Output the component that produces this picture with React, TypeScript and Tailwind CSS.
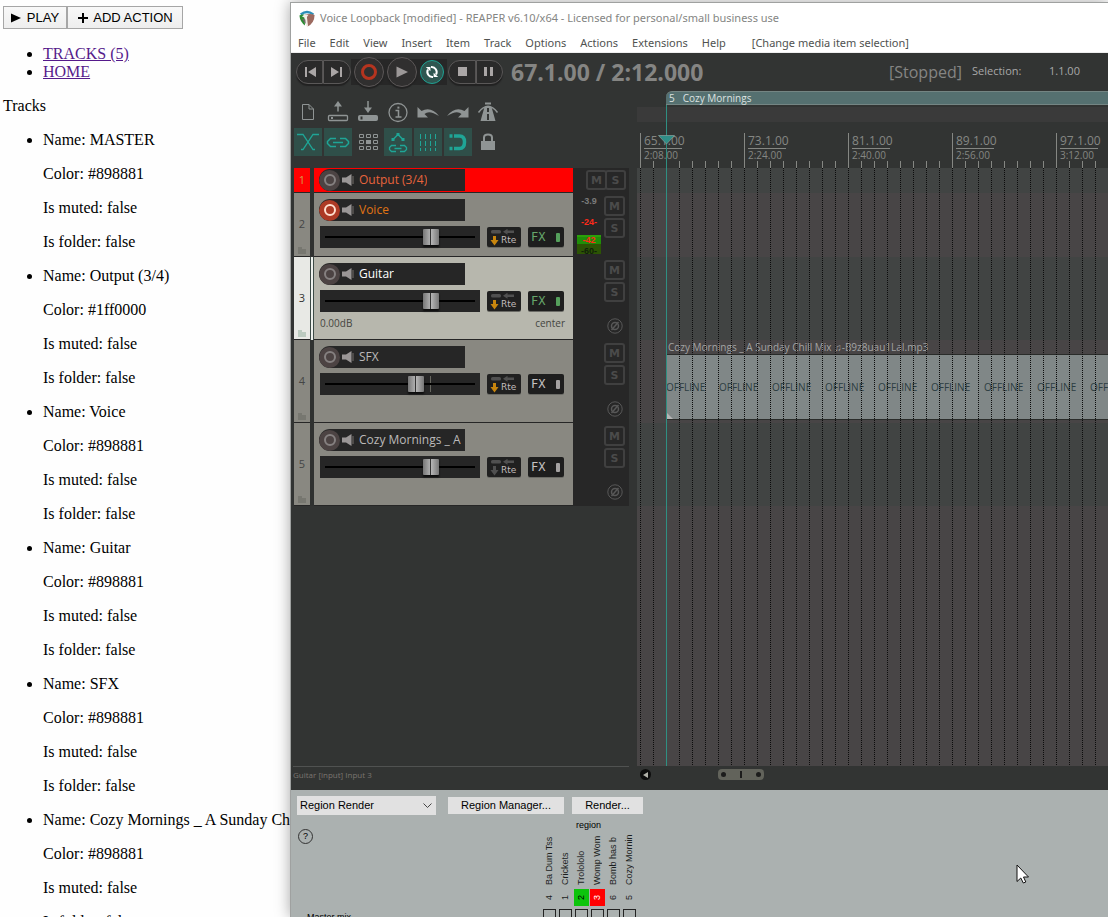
import React from "react";

type Track = {
  n: number;
  name: string;
  level: number;
  armed?: boolean;
  selected?: boolean;
  routed?: boolean;
  fxOn?: boolean;
  row: string;
  lane: string;
  nameColor: string;
  compact?: boolean;
  tall?: boolean;
};

const tracks: Track[] = [
  { n: 1, name: "Output (3/4)", level: 712, compact: true, row: "h-[25px]", lane: "bg-[#414443]", nameColor: "text-[#e8643c]" },
  { n: 2, name: "Voice", level: 712, armed: true, routed: true, fxOn: true, row: "h-[64px]", lane: "bg-[#484546]", nameColor: "text-[#e07414]" },
  { n: 3, name: "Guitar", level: 712, selected: true, routed: true, fxOn: true, tall: true, row: "h-[83px]", lane: "bg-[#414443]", nameColor: "text-white" },
  { n: 4, name: "SFX", level: 608, routed: true, tall: true, row: "h-[83px]", lane: "bg-[#484546]", nameColor: "text-[#bcbaba]" },
  { n: 5, name: "Cozy Mornings _ A Sunday Chill Mix", level: 712, tall: true, row: "h-[83px]", lane: "bg-[#414443]", nameColor: "text-[#bcbaba]" },
];

const listed = [
  { name: "MASTER", color: "#898881" },
  { name: "Output (3/4)", color: "#1ff0000" },
  { name: "Voice", color: "#898881" },
  { name: "Guitar", color: "#898881" },
  { name: "SFX", color: "#898881" },
  { name: "Cozy Mornings _ A Sunday Chill Mix", color: "#898881" },
];

const menus = ["File", "Edit", "View", "Insert", "Item", "Track", "Options", "Actions", "Extensions", "Help"];

const bars = [
  ["65.1.00", "2:08.00"],
  ["73.1.00", "2:24.00"],
  ["81.1.00", "2:40.00"],
  ["89.1.00", "2:56.00"],
  ["97.1.00", "3:12.00"],
];

const regions = [
  { n: 4, name: "Ba Dum Tss", tag: "text-[#1c1f1f]" },
  { n: 1, name: "Crickets", tag: "text-[#1c1f1f]" },
  { n: 2, name: "Trolololo", tag: "bg-[#0cc40c] text-black" },
  { n: 3, name: "Womp Wom", tag: "bg-[#ff0000] text-white" },
  { n: 6, name: "Bomb has b", tag: "text-[#1c1f1f]" },
  { n: 5, name: "Cozy Mornin", tag: "text-[#1c1f1f]" },
];

function WebPage() {
  return (
    <section className="w-[290px] shrink-0 overflow-hidden whitespace-nowrap bg-[#fefefe] pl-[3px] pt-1.5 font-['Liberation_Serif',serif] text-[16px] leading-[18px] text-black">
      <div className="flex font-['Liberation_Sans',sans-serif] text-[13px] text-black">
        <button className="flex h-[23px] w-[64px] items-center justify-center gap-1.5 border border-[#a6a6a6] bg-linear-to-b from-[#f8f8f8] to-[#eeeeee]">
          <svg width="10" height="10" viewBox="0 0 10 10"><path d="M0 0.5 L10 5 L0 9.5Z" /></svg>
          PLAY
        </button>
        <button className="flex h-[23px] w-[116px] items-center justify-center gap-1 border border-[#a6a6a6] bg-linear-to-b from-[#f8f8f8] to-[#eeeeee]">
          <svg width="12" height="12" viewBox="0 0 12 12"><path d="M6 1V11M1 6H11" stroke="#000" strokeWidth="2" /></svg>
          ADD ACTION
        </button>
      </div>
      <ul className="mt-4 list-disc pl-10">
        <li><a href="#tracks" className="text-[#551a8b] underline">TRACKS (5)</a></li>
        <li><a href="#home" className="text-[#551a8b] underline">HOME</a></li>
      </ul>
      <p className="my-4">Tracks</p>
      <ul className="list-disc pl-10">
        {listed.map((t) => (
          <li key={t.name}>
            <p className="mb-4">Name: {t.name}</p>
            <p className="mb-4">Color: {t.color}</p>
            <p className="mb-4">Is muted: false</p>
            <p className="mb-4">Is folder: false</p>
          </li>
        ))}
      </ul>
    </section>
  );
}

function Logo() {
  return (
    <svg width="16" height="17" viewBox="0 0 16 17">
      <path d="M1 3.4Q8-2 15 3.4L14 5.6Q8 1 2.4 5.4Z" fill="#2d8fb8" />
      <path d="M0.4 5.6Q3 4 5.4 4.6L6 15.6Q1 12 0.4 5.6Z" fill="#2e8c34" />
      <path d="M6 4.6Q12 3 15.6 5Q15.4 13 8.6 16.6Q7.6 10 6 4.6Z" fill="#9c6a60" />
      <path d="M3 6.4Q6 3.4 9.4 5.4Q7.4 6 8.2 9L9 16.6L7 16Q7 9 5.4 7.4Q4 6.8 3 6.4Z" fill="#f4efe8" />
      <path d="M2.6 8.4L6.4 9.4L6.8 14Z" fill="#6f6a66" />
    </svg>
  );
}

function TitleAndMenu() {
  return (
    <header className="bg-white font-['Noto_Sans',sans-serif] text-[11px]">
      <div className="flex h-[30px] items-center gap-[5px] pl-2 text-[#848583]">
        <Logo />
        <h1>Voice Loopback [modified] - REAPER v6.10/x64 - Licensed for personal/small business use</h1>
      </div>
      <nav className="flex h-5 items-center gap-3.5 border-b border-[#eeeeee] pl-[7px] pt-0.5 text-[#505250]">
        {menus.map((m) => (
          <button key={m}>{m}</button>
        ))}
        <span className="pl-3">[Change media item selection]</span>
      </nav>
    </header>
  );
}

function Transport() {
  return (
    <div className="flex h-[37px] items-center pl-[5px] font-['Open_Sans',sans-serif] text-[#8f8f8f]">
      <div className="flex h-[30px] shrink-0 items-center">
        <button aria-label="Go to start" className="flex h-6 w-[27px] items-center justify-center rounded-l-full border border-[#5a5858] bg-[#2a2a2a] pl-0.5 shadow-[0_2px_1px_#222]">
          <svg width="11" height="10" viewBox="0 0 11 10" fill="#aaa6a6"><path d="M0 0H2V10H0ZM11 0V10L3 5Z" /></svg>
        </button>
        <button aria-label="Go to end" className="flex h-6 w-[28px] items-center justify-center rounded-r-full border border-[#5a5858] bg-[#2a2a2a] pr-0.5 shadow-[0_2px_1px_#222]">
          <svg width="11" height="10" viewBox="0 0 11 10" fill="#aaa6a6"><path d="M9 0H11V10H9ZM0 0V10L8 5Z" /></svg>
        </button>
        <div className="flex h-[26px] items-center gap-[3px] bg-[#272727] px-[3px]">
          <button aria-label="Record" className="flex size-[30px] items-center justify-center rounded-full border border-[#5c5858] bg-[#302f2f] shadow-[0_2px_1px_#222]">
            <span className="size-4 rounded-full border-[3px] border-[#b5341f]" />
          </button>
          <button aria-label="Play" className="flex size-[30px] items-center justify-center rounded-full border border-[#5c5858] bg-[#302f2f] shadow-[0_2px_1px_#222]">
            <svg width="12" height="12" viewBox="0 0 12 12" fill="#9c9898"><path d="M0.5 0.5L12 6L0.5 11.5Z" /></svg>
          </button>
          <button aria-label="Repeat" className="flex size-6 items-center justify-center rounded-full border border-[#1fa294] bg-[#2f5650]">
            <svg width="14" height="14" viewBox="0 0 14 14" fill="none" stroke="#fff" strokeWidth="2">
              <path d="M6 2.100A5 5 0 0 1 11 9.500M8 11.900A5 5 0 0 1 3 4.500" />
              <path d="M0.800 2H5.400V6.200ZM13.200 12H8.600V7.800Z" fill="#fff" stroke="none" />
            </svg>
          </button>
        </div>
        <button aria-label="Stop" className="ml-px flex h-6 w-[28px] items-center justify-center rounded-l-full border border-[#5a5858] bg-[#2a2a2a] shadow-[0_2px_1px_#222]">
          <span className="size-[9px] bg-[#aaa6a6]" />
        </button>
        <button aria-label="Pause" className="flex h-6 w-[27px] items-center justify-center gap-[3px] rounded-r-full border border-[#5a5858] bg-[#2a2a2a] pr-0.5 shadow-[0_2px_1px_#222]">
          <span className="h-[9px] w-[3px] bg-[#aaa6a6]" />
          <span className="h-[9px] w-[3px] bg-[#aaa6a6]" />
        </button>
      </div>
      <span className="ml-2 w-[378px] shrink-0 whitespace-nowrap text-[23px] font-bold leading-7 text-[#858583]">67.1.00 / 2:12.000</span>
      <span className="w-[83px] shrink-0 text-[16px] text-[#858583]">[Stopped]</span>
      <span className="w-[77px] shrink-0 text-[11px] text-[#a8a8a8]">Selection:</span>
      <span className="text-[11px] text-[#a8a8a8]">1.1.00</span>
    </div>
  );
}

const tools: { label: string; on?: boolean; art: React.ReactNode }[] = [
  { label: "New project", art: <path d="M8.500 6.500H15L19.500 11V21.500H8.500ZM15 6.500V11H19.500" /> },
  { label: "Open project", art: <><path d="M14 13.500V5" strokeWidth="1.500" /><path d="M10 8.500L14 3L18 8.500Z" fill="currentColor" stroke="none" /><rect x="4.500" y="17.500" width="19" height="5" rx="1" strokeWidth="1.300" /><path d="M7 20H9" strokeWidth="2" /></> },
  { label: "Save project", art: <><path d="M14 3V11" strokeWidth="1.500" /><path d="M10 9.500L14 15L18 9.500Z" fill="currentColor" stroke="none" /><rect x="4.500" y="17.500" width="19" height="5" rx="1" fill="currentColor" /><path d="M7.500 18.500V21.500" stroke="#323433" strokeWidth="2" /></> },
  { label: "Project settings", art: <><circle cx="14" cy="14.500" r="9" strokeWidth="1.300" /><path d="M11.500 12.500H14.500V19M11.500 19H17.500" strokeWidth="1.500" /><path d="M13.400 8.600h2v2h-2z" fill="currentColor" stroke="none" /></> },
  { label: "Undo", art: <path d="M3.500 9V19.500H14L10.500 16Q15 11.500 25 18Q17 8 7.500 13Z" fill="currentColor" stroke="none" /> },
  { label: "Redo", art: <path d="M24.500 9V19.500H14L17.500 16Q13 11.500 3 18Q11 8 20.500 13Z" fill="currentColor" stroke="none" /> },
  { label: "Metronome", art: <><path d="M10.500 9H17.500L21.500 23H6.500Z" fill="currentColor" stroke="none" /><path d="M14 10V14M14 16V22" stroke="#323433" strokeWidth="2" /><path d="M4.500 14.500Q14 2 23.500 14.500" strokeWidth="1.500" /><path d="M11 5.500H17" strokeWidth="2" /></> },
  { label: "Auto crossfade", on: true, art: <path d="M3 6.500H9L19 21.500H21M25 6.500H19L9 21.500H7" strokeWidth="1.300" /> },
  { label: "Item grouping", on: true, art: <path d="M12 10.500H6.500L3.500 13.500V15.500L6.500 18.500H12M16 10.500H21.500L24.500 13.500V15.500L21.500 18.500H16M9 14.500H19" strokeWidth="1.500" /> },
  { label: "Ripple editing", art: <><path d="M5.500 6.500h4v3h-4zM12.500 6.500h4v3h-4zM19.500 6.500h4v3h-4zM5.500 12.500h4v3h-4zM19.500 12.500h4v3h-4zM5.500 18.500h4v3h-4zM12.500 18.500h4v3h-4zM19.500 18.500h4v3h-4z" /><path d="M12 12h5v4h-5z" fill="currentColor" stroke="none" /></> },
  { label: "Move envelopes", on: true, art: <><path d="M9 11.500L14 6.500L19 11.500" strokeWidth="1.500" /><path d="M12.500 5h3v3h-3zM7.500 10h3v3h-3zM17.500 10h3v3h-3z" fill="currentColor" stroke="none" /><path d="M12 17.500H7.500L5.500 19.500V21.500L7.500 23.500H12M16 17.500H20.500L22.500 19.500V21.500L20.500 23.500H16M10.500 20.500H17.500" strokeWidth="1.300" /></> },
  { label: "Grid lines", on: true, art: <path d="M6.500 6V23M11.500 6V23M16.500 6V23M21.500 6V23" strokeDasharray="5 2" /> },
  { label: "Snap", on: true, art: <><path d="M10 8H15.500Q20.500 8 20.500 14Q20.500 20.500 15.500 20.500H10" strokeWidth="3.500" /><path d="M5.500 6.200h3v3.500h-3zM5.500 18.700h3v3.500h-3z" fill="currentColor" stroke="none" /></> },
  { label: "Locking", art: <><path d="M7 13H21V22H7Z" fill="currentColor" stroke="none" /><path d="M10 13V9.500Q10 6.500 14 6.500Q18 6.500 18 9.500V13" strokeWidth="2" /></> },
];

function Toolbar() {
  return (
    <div className="grid h-[78px] w-fit grid-cols-7 content-end gap-x-0.5 gap-y-0.5 pb-3 pl-[3px]">
      {tools.map((t) => (
        <button
          key={t.label}
          aria-label={t.label}
          className={t.on ? "size-7 bg-[#2f4f49] text-[#1fa596]" : "size-7 text-[#8f9494]"}
        >
          <svg width="28" height="28" viewBox="0 0 28 28" fill="none" stroke="currentColor" strokeWidth="1">
            {t.art}
          </svg>
        </button>
      ))}
    </div>
  );
}

const msButton =
  "flex h-5 w-[21px] items-center justify-center rounded-[3px] border-2 border-[#404040] font-['DejaVu_Sans',sans-serif] text-[11px] font-bold leading-none text-[#4b4b4b]";

function Meters({ t }: { t: Track }) {
  if (t.compact) {
    return (
      <div className="flex w-14 shrink-0 justify-end -space-x-0.5 bg-[#272727] pr-[3px] pt-0.5">
        <button aria-label="Mute" className={msButton}>M</button>
        <button aria-label="Solo" className={msButton}>S</button>
      </div>
    );
  }
  return (
    <div className="flex w-14 shrink-0 justify-between bg-[#272727] pl-1 pr-1 pt-[3px]">
      <div className="flex w-6 flex-col items-center font-['Liberation_Sans',sans-serif] text-[9px] font-bold">
        {t.armed && (
          <>
            <span className="leading-[11px] text-[#7a7a7a]">-3.9</span>
            <span className="pt-2 leading-[14px] text-[#ff2a1a]">-24-</span>
            <div className="mt-1.5 flex h-[19px] w-6 flex-col items-center justify-between border-t-2 border-[#2aa00a] bg-linear-to-b from-[#1f8f08] from-40% to-[#2c5404] to-40% leading-[6px]">
              <span className="text-[#ff2a1a]">-42</span>
              <span className="text-[#10200a]">-60-</span>
            </div>
          </>
        )}
      </div>
      <div className="flex flex-col items-center gap-0.5">
        <button aria-label="Mute" className={msButton}>M</button>
        <button aria-label="Solo" className={msButton}>S</button>
        {t.tall && (
          <button aria-label="Phase" className="mt-3.5 size-4">
            <svg width="16" height="16" viewBox="0 0 16 16" fill="none" stroke="#585858">
              <circle cx="8" cy="8" r="7.200" />
              <circle cx="8" cy="8" r="3.500" strokeWidth="1.500" />
              <path d="M4.500 12L11.500 4" strokeWidth="1.500" />
            </svg>
          </button>
        )}
      </div>
    </div>
  );
}

function TrackRow({ t }: { t: Track }) {
  const numberBg = t.compact
    ? "bg-[#ff0000] text-[#d99a4a]"
    : t.selected
      ? "bg-[#e8e9e5] text-[#333]"
      : "bg-[#898881] text-[#444545]";
  const panelBg = t.compact ? "bg-[#ff0000]" : t.selected ? "bg-[#b7b7ad]" : "bg-[#898881]";
  return (
    <li className={`flex ${t.row}`}>
      <div className={`relative flex w-4 shrink-0 items-center justify-center border-b border-[#262626] text-[11px] ${numberBg}`}>
        {t.n}
        {!t.compact && (
          <svg className={`absolute bottom-0.5 left-1 ${t.selected ? "text-[#bccbc0]" : "text-[#777770]"}`} width="8" height="7" viewBox="0 0 8 7" fill="currentColor">
            <path d="M0 0H4V2H8V7H0Z" />
          </svg>
        )}
      </div>
      <div className={t.selected ? "w-1 shrink-0 border-x border-[#3c4a46] bg-[#eef2ee]" : "w-1 shrink-0 bg-[#2f3130]"} />
      <div className={`flex min-w-0 flex-1 flex-col border-b border-[#262626] pl-[5px] ${t.compact ? "pt-px" : "pt-1.5"} ${panelBg}`}>
        <div className="flex h-[22px] w-[146px] shrink-0 items-center overflow-hidden rounded-l-full bg-[#262626]">
          <button
            aria-label="Record arm"
            className={`flex size-[21px] shrink-0 items-center justify-center rounded-full ${t.armed ? "bg-[#ad3a25]" : "bg-[#4c4343]"}`}
          >
            <span className={`size-3 rounded-full border-2 ${t.armed ? "border-[#ffe0d0]" : "border-[#858080]"}`} />
          </button>
          <svg className="ml-0.5 shrink-0" width="12" height="12" viewBox="0 0 12 12">
            <path d="M0 3.500H4L9.500 0V12L4 8.500H0Z" fill="#9a9696" />
            <path d="M11 2V10" stroke="#77706c" />
          </svg>
          <span className={`ml-[5px] mr-0.5 overflow-hidden whitespace-nowrap text-[12px] leading-5 ${t.nameColor}`}>{t.name}</span>
        </div>
        {!t.compact && (
          <div className="mt-[5px] flex h-[22px] items-center pl-px">
            <div className="relative h-[22px] w-40 shrink-0 bg-[#262626]">
              {t.level !== 712 && <span className="absolute left-[110px] top-[3px] h-4 w-px bg-[#66665f]" />}
              <input
                type="range"
                aria-label={`${t.name} volume`}
                min={0}
                max={1000}
                defaultValue={t.level}
                className="relative block h-[22px] w-40 appearance-none bg-[linear-gradient(#000,#000)] bg-[length:150px_2px] bg-center bg-no-repeat [&::-webkit-slider-thumb]:h-4 [&::-webkit-slider-thumb]:w-4 [&::-webkit-slider-thumb]:appearance-none [&::-webkit-slider-thumb]:rounded-[1px] [&::-webkit-slider-thumb]:bg-[linear-gradient(90deg,#777_0,#b0b0b0_45%,#333_45%,#333_52%,#b5b5b5_52%,#777_100%)] [&::-webkit-slider-thumb]:shadow-[0_2px_2px_#0c0c0c]"
              />
            </div>
            <button className="ml-[7px] flex h-5 w-[34px] shrink-0 items-end rounded-[2px] bg-[#202020] pl-[3px] shadow-[0_1px_0_#6b6b66]">
              <svg width="30" height="18" viewBox="0 0 30 18" className="-mr-[19px] shrink-0">
                <rect x="1" y="1" width="10" height="3.500" rx="1.500" fill="#505050" />
                <path d="M13 2.800L17.500 -0.200V1.500H24V4H17.500V5.800Z" fill="#505050" />
                <path d="M3 7H6V11H8.500L4.500 16.500L0.500 11H3Z" fill={t.routed ? "#c8860e" : "#505050"} />
              </svg>
              <span className="font-['DejaVu_Sans',sans-serif] text-[9px] leading-[13px] text-[#c0bcbc]">Rte</span>
            </button>
            <button className={`ml-[7px] flex h-5 w-9 shrink-0 items-center justify-between rounded-[2px] bg-[#1e1e1e] pl-[3px] pr-1 font-['DejaVu_Sans_Mono',monospace] text-[12px] leading-none shadow-[0_1px_0_#6b6b66] ${t.fxOn ? "text-[#66a66b]" : "text-[#c5c2c2]"}`}>
              FX
              <span className={`h-[9px] w-1 rounded-[1px] ${t.fxOn ? "bg-[#55a05c]" : "bg-[#a5a2a2]"}`} />
            </button>
          </div>
        )}
        {t.selected && (
          <div className="flex justify-between pl-px pr-2 pt-[3px] text-[10px] leading-4 text-[#45453f]">
            <span>0.00dB</span>
            <span>center</span>
          </div>
        )}
      </div>
      <Meters t={t} />
    </li>
  );
}

function Ruler() {
  return (
    <div className="flex h-[78px] flex-col overflow-hidden pt-px">
      <div className="ml-[29px] flex h-3.5 items-center gap-2 rounded-tl-md border-y border-[#748583] bg-[#557070] pl-[3px] text-[10px] leading-3 text-[#dde2e0]">
        <span>5</span>
        <span>Cozy Mornings</span>
      </div>
      <div className="mt-0.5 h-[15px] bg-[#3a3a3a]" />
      <div className="relative mt-[11px] flex h-[35px] pl-[3px]">
        {bars.map(([bar, time]) => (
          <div key={bar} className="w-[104px] shrink-0 border-l border-[#858783] pl-[3px] text-[#858783]">
            <div className="w-[38px] border-b border-[#858783] text-[12px] leading-[15px]">{bar}</div>
            <div className="text-[10px] leading-3">{time}</div>
          </div>
        ))}
        <svg className="absolute bottom-0 left-[3px] h-[7px] w-full">
          <defs>
            <pattern id="ticks" width="13" height="7" patternUnits="userSpaceOnUse">
              <rect width="1" height="7" fill="#858783" />
            </pattern>
          </defs>
          <rect width="100%" height="7" fill="url(#ticks)" />
        </svg>
      </div>
    </div>
  );
}

function Arrange() {
  return (
    <div className="relative flex min-w-0 flex-1 flex-col overflow-hidden">
      <Ruler />
      <div className="relative flex-1 overflow-hidden bg-[#484546]">
        {tracks.map((t) => (
          <div key={t.n} className={`${t.row} ${t.lane}`}>
            {t.n === 4 && (
              <div className="ml-[29px]">
                <p className="h-3.5 whitespace-nowrap pl-0.5 text-[10px] leading-[15px] text-[#a3a3a3]">Cozy Mornings _ A Sunday Chill Mix ♫-B9z8uau1LaI.mp3</p>
                <div className="flex h-[66px] items-center overflow-hidden border-y border-[#2a2c2a] bg-[#808787] text-[10px] leading-4 text-[#2c3d41]">
                  {Array.from({ length: 9 }, (_, i) => (
                    <span key={i} className="w-[53px] shrink-0">OFFLINE</span>
                  ))}
                </div>
              </div>
            )}
          </div>
        ))}
        <svg className="pointer-events-none absolute inset-0 size-full">
          <defs>
            <pattern id="grid" x="3" width="13" height="2" patternUnits="userSpaceOnUse">
              <rect width="1" height="1" fill="#0c0c0c" />
            </pattern>
          </defs>
          <rect width="100%" height="100%" fill="url(#grid)" />
          <path d="M29 244V251H36Z" fill="#b5b5b5" />
        </svg>
      </div>
      <div className="pointer-events-none absolute bottom-6 left-[29px] top-[15px] w-px bg-[#2f8f82]" />
      <svg className="absolute left-[21px] top-[45px]" width="17" height="10" viewBox="0 0 17 10">
        <path d="M0.500 0.500H16.500L8.500 9Z" fill="#2f8d86" stroke="#7f9a97" strokeWidth="0.800" />
      </svg>
      <div className="flex h-6 items-start pl-[3px] pt-[3px]">
        <button aria-label="Scroll left" className="flex size-[11px] items-center justify-center rounded-full bg-[#0c0c0c]">
          <svg width="5" height="6" viewBox="0 0 5 6"><path d="M5 0V6L0 3Z" fill="#b0b0a8" /></svg>
        </button>
        <div className="ml-[67px] flex h-[11px] w-[46px] items-center justify-between rounded-[4px] bg-[#62635b] px-[3px]">
          <span className="size-[5px] rounded-full bg-[#1c1c1c]" />
          <span className="h-[7px] w-0.5 bg-[#1c1c1c]" />
          <span className="size-[5px] rounded-full bg-[#1c1c1c]" />
        </div>
      </div>
    </div>
  );
}

function RenderMatrix() {
  return (
    <section className="flex h-[127px] shrink-0 flex-col overflow-hidden bg-[#abb1b0] pl-1.5 pt-1.5 font-['Liberation_Sans',sans-serif] text-[11px] text-black">
      <div className="flex h-[19px] items-center">
        <div className="relative">
          <select aria-label="Render source" className="block h-[19px] w-[139px] appearance-none bg-[#e1e1e1] pl-[3px]">
            <option>Region Render</option>
          </select>
          <svg className="pointer-events-none absolute right-1 top-[7px]" width="9" height="6" viewBox="0 0 9 6"><path d="M0.500 0.500L4.500 4.500L8.500 0.500" fill="none" stroke="#444" /></svg>
        </div>
        <button className="ml-3 h-[17px] w-[116px] bg-[#e1e1e1]">Region Manager...</button>
        <button className="ml-2 h-[17px] w-[71px] bg-[#e1e1e1]">Render...</button>
      </div>
      <div className="flex">
        <div className="w-[245px] shrink-0 pl-px">
          <button aria-label="Help" className="mt-3.5 flex size-[15px] items-center justify-center rounded-full border border-[#333] text-[9px] leading-none">?</button>
          <p className="mt-[68px] pl-[9px] text-[9px] leading-[11px]">Master mix</p>
        </div>
        <div>
          <p className="w-[93px] pt-1 text-center text-[9px] leading-[13px]">region</p>
          <div className="mt-0.5 flex gap-px">
            {regions.map((r) => (
              <div key={r.n} className="flex w-[15px] flex-col items-center">
                <span className="h-[53px] w-[15px] rotate-180 whitespace-nowrap pt-0.5 text-[9px] leading-[15px] text-[#1c1f1f] [writing-mode:vertical-rl]">{r.name}</span>
                <span className={`mt-0.5 flex h-[17px] w-[15px] rotate-180 items-center justify-center text-[9px] leading-[15px] [writing-mode:vertical-rl] ${r.tag}`}>{r.n}</span>
                <input type="checkbox" aria-label={`Render ${r.name}`} className="mt-[3px] size-[13px] shrink-0 appearance-none border border-[#222]" />
              </div>
            ))}
          </div>
        </div>
      </div>
    </section>
  );
}

export default function App() {
  return (
    <main className="relative flex h-screen overflow-hidden bg-[#fefefe]">
      <WebPage />
      <div className="relative mt-0.5 flex min-w-0 flex-1 flex-col border-l border-t border-[#9fa1a0] bg-[#323433] shadow-[0_0_14px_rgba(0,0,0,0.35)]">
        <TitleAndMenu />
        <Transport />
        <div className="flex min-h-0 flex-1 font-['Open_Sans',sans-serif]">
          <div className="flex w-[346px] shrink-0 flex-col">
            <Toolbar />
            <ul className="flex-1 pl-[3px] pr-2">
              {tracks.map((t) => (
                <TrackRow key={t.n} t={t} />
              ))}
            </ul>
            <div className="h-6 pl-0.5 pr-2">
              <p className="border-t border-[#505251] text-[8px] leading-4 text-[#7a7570]">Guitar [input] Input 3</p>
            </div>
          </div>
          <Arrange />
        </div>
        <RenderMatrix />
      </div>
      <svg className="absolute left-[1016px] top-[864px]" width="13" height="20" viewBox="0 0 13 20">
        <path d="M1 1V17.500L4.800 14L7.300 19L9.800 18L7.500 13H12.500Z" fill="#fff" stroke="#111" />
      </svg>
    </main>
  );
}
